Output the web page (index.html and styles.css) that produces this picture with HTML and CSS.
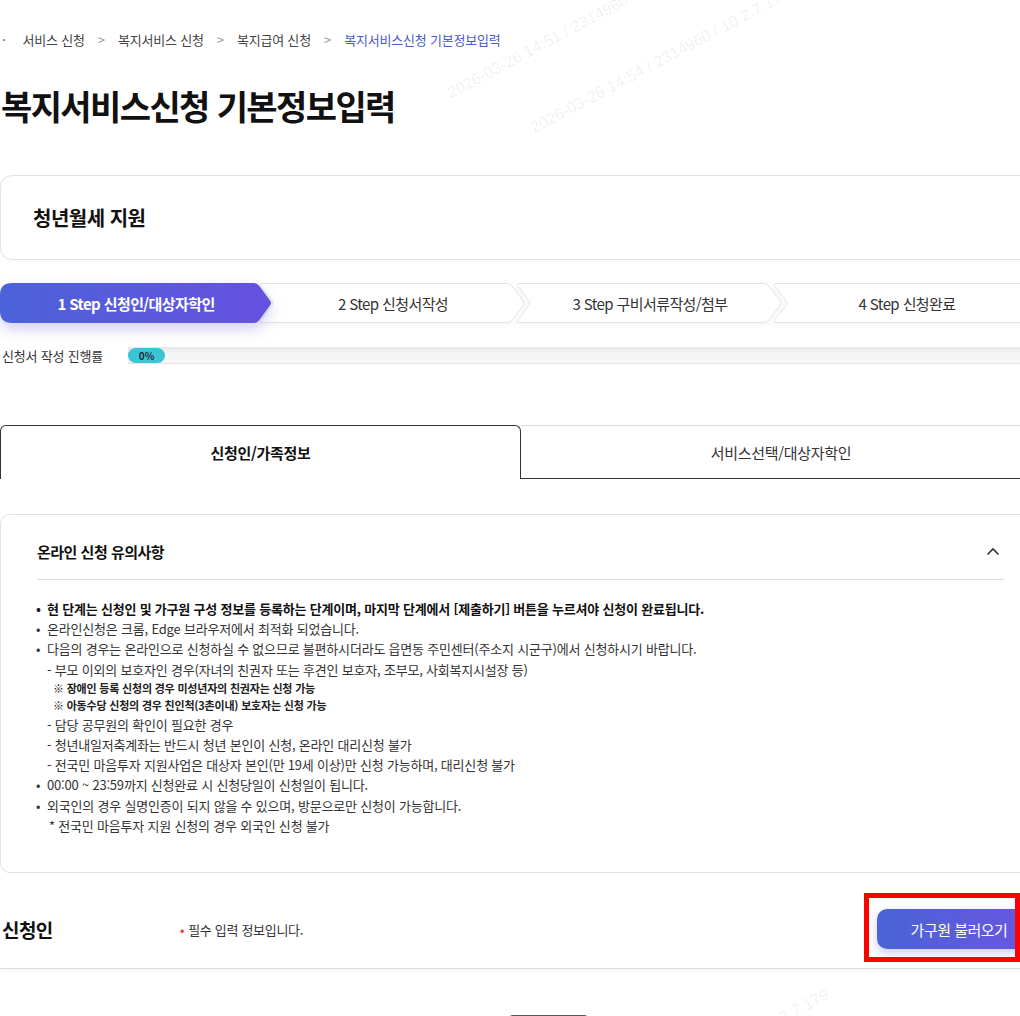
FILE: index.html
```html
<!DOCTYPE html>
<html lang="ko">
<head>
    <meta charset="UTF-8">
    <meta name="viewport" content="width=device-width, initial-scale=1.0">
    <title>복지서비스신청 기본정보입력</title>
    <link rel="stylesheet" href="styles.css">
</head>
<body>

<div class="page">
    <!-- 경로 -->
    <nav class="breadcrumb">
        <span class="crumb-home">·</span>
        <span>서비스 신청</span>
        <span class="sep">&gt;</span>
        <span>복지서비스 신청</span>
        <span class="sep">&gt;</span>
        <span>복지급여 신청</span>
        <span class="sep">&gt;</span>
        <span class="current">복지서비스신청 기본정보입력</span>
    </nav>

    <h1 class="page-title">복지서비스신청 기본정보입력</h1>

    <div class="service-card">청년월세 지원</div>

    <!-- 단계 -->
    <ol class="steps">
        <li class="step active">
            <svg width="272" height="40" viewBox="0 0 272 40">
                <defs>
                    <linearGradient id="stepGrad" x1="0" y1="0" x2="1" y2="0">
                        <stop offset="0" stop-color="#4c62d8"/>
                        <stop offset="1" stop-color="#6651df"/>
                    </linearGradient>
                </defs>
                <path d="M12 0 H254 Q257 0 259 2.5 L270 17.5 Q272 20 270 22.5 L259 37.5 Q257 40 254 40 H12 Q0 40 0 28 V12 Q0 0 12 0 Z" fill="url(#stepGrad)"/>
            </svg>
            <span>1 Step 신청인/대상자학인</span>
        </li>
        <li class="step">
            <svg width="272" height="40" viewBox="0 0 272 40">
                <path d="M5 0.5 H250 Q253 0.5 255 3 L266 17.5 Q268 20 266 22.5 L255 37 Q253 39.5 250 39.5 H5 Q2 39.5 3.5 37.5 L15 22.5 Q17 20 15 17.5 L3.5 2.5 Q2 0.5 5 0.5 Z" fill="#fff" stroke="#e4e4e4"/>
            </svg>
            <span>2 Step 신청서작성</span>
        </li>
        <li class="step">
            <svg width="272" height="40" viewBox="0 0 272 40">
                <path d="M5 0.5 H250 Q253 0.5 255 3 L266 17.5 Q268 20 266 22.5 L255 37 Q253 39.5 250 39.5 H5 Q2 39.5 3.5 37.5 L15 22.5 Q17 20 15 17.5 L3.5 2.5 Q2 0.5 5 0.5 Z" fill="#fff" stroke="#e4e4e4"/>
            </svg>
            <span>3 Step 구비서류작성/첨부</span>
        </li>
        <li class="step">
            <svg width="272" height="40" viewBox="0 0 272 40">
                <path d="M5 0.5 H260 Q271.5 0.5 271.5 12 V28 Q271.5 39.5 260 39.5 H5 Q2 39.5 3.5 37.5 L15 22.5 Q17 20 15 17.5 L3.5 2.5 Q2 0.5 5 0.5 Z" fill="#fff" stroke="#e4e4e4"/>
            </svg>
            <span>4 Step 신청완료</span>
        </li>
    </ol>

    <div class="progress-row">
        <span class="progress-label">신청서 작성 진행률</span>
        <div class="progress-track">
            <div class="progress-fill">0%</div>
        </div>
    </div>

    <!-- 탭 -->
    <div class="tabs">
        <div class="tab active">신청인/가족정보</div>
        <div class="tab">서비스선택/대상자학인</div>
    </div>

    <!-- 유의사항 -->
    <section class="notice">
        <div class="notice-head">
            <h3>온라인 신청 유의사항</h3>
            <svg class="chevron" width="14" height="9" viewBox="0 0 14 9">
                <polyline points="1.5,7.5 7,2 12.5,7.5" fill="none" stroke="#333" stroke-width="1.6"/>
            </svg>
        </div>
        <ul class="notice-list">
            <li class="strong">현 단계는 신청인 및 가구원 구성 정보를 등록하는 단계이며, 마지막 단계에서 [제출하기] 버튼을 누르셔야 신청이 완료됩니다.</li>
            <li>온라인신청은 크롬, Edge 브라우저에서 최적화 되었습니다.</li>
            <li>다음의 경우는 온라인으로 신청하실 수 없으므로 불편하시더라도 읍면동 주민센터(주소지 시군구)에서 신청하시기 바랍니다.
                <p class="sub">- 부모 이외의 보호자인 경우(자녀의 친권자 또는 후견인 보호자, 조부모, 사회복지시설장 등)</p>
                <p class="mark">※ 장애인 등록 신청의 경우 미성년자의 친권자는 신청 가능</p>
                <p class="mark">※ 아동수당 신청의 경우 친인척(3촌이내) 보호자는 신청 가능</p>
                <p class="sub">- 담당 공무원의 확인이 필요한 경우</p>
                <p class="sub">- 청년내일저축계좌는 반드시 청년 본인이 신청, 온라인 대리신청 불가</p>
                <p class="sub">- 전국민 마음투자 지원사업은 대상자 본인(만 19세 이상)만 신청 가능하며, 대리신청 불가</p>
            </li>
            <li>00:00 ~ 23:59까지 신청완료 시 신청당일이 신청일이 됩니다.</li>
            <li>외국인의 경우 실명인증이 되지 않을 수 있으며, 방문으로만 신청이 가능합니다.
                <p class="star">* 전국민 마음투자 지원 신청의 경우 외국인 신청 불가</p>
            </li>
        </ul>
    </section>

    <!-- 신청인 -->
    <div class="applicant-head">
        <h2 class="applicant-title">신청인</h2>
        <p class="required-note">필수 입력 정보입니다.</p>
        <button class="btn-family">가구원 불러오기</button>
    </div>

    <div class="bottom-btn"></div>

    <div class="highlight-box"></div>

    <span class="watermark wm-1">2026-03-26 14:51 / 2314960 / 10.2.7.179</span>
    <span class="watermark wm-2">2026-03-26 14:54 / 2314960 / 10.2.7.179</span>
    <span class="watermark wm-3">2026-03-26 14:54 / 2314960 / 10.2.7.179</span>
</div>

</body>
</html>
```

FILE: styles.css
```css
* {
    box-sizing: border-box;
}

html, body {
    margin: 0;
    overflow: hidden;
}

body {
    font-family: "Noto Sans CJK KR", "Noto Sans", sans-serif;
    color: #222;
    background-color: #fff;
}

.page {
    position: relative;
    width: 1041px;
    height: 1016px;
}

/* 경로 */
.breadcrumb {
    display: flex;
    align-items: center;
    gap: 13px;
    height: 50px;
    padding: 30px 0 0 2px;
    font-size: 13px;
    line-height: 20px;
    letter-spacing: -0.2px;
    color: #444;
}

.breadcrumb .crumb-home {
    margin-right: 4px;
}

.breadcrumb .sep {
    color: #999;
    letter-spacing: 0;
}

.breadcrumb .current {
    color: #4a5ad2;
}

.page-title {
    margin: 35px 0 0;
    padding-left: 1px;
    font-size: 34px;
    line-height: 42px;
    font-weight: 700;
    letter-spacing: -1.6px;
    color: #111;
}

.service-card {
    display: flex;
    align-items: center;
    height: 85px;
    margin-top: 48px;
    padding-left: 32px;
    border: 1px solid #e2e2e2;
    border-radius: 12px;
    box-shadow: 0 1px 3px rgba(0, 0, 0, 0.04);
    font-size: 20px;
    font-weight: 700;
    letter-spacing: -0.5px;
    color: #111;
}

/* 단계 */
.steps {
    display: flex;
    height: 40px;
    margin: 23px 0 0;
    padding: 0;
    list-style: none;
}

.step {
    position: relative;
    flex: 0 0 272px;
    display: flex;
    align-items: center;
    justify-content: center;
    height: 40px;
    font-size: 15px;
    letter-spacing: -0.6px;
    color: #333;
}

.step + .step {
    margin-left: -15px;
}

.step svg {
    position: absolute;
    left: 0;
    top: 0;
    filter: drop-shadow(0 2px 3px rgba(0, 0, 0, 0.04));
}

.step span {
    position: relative;
}

.step.active {
    z-index: 2;
    color: #fff;
    font-weight: 700;
}

.step.active svg {
    filter: drop-shadow(0 6px 7px rgba(90, 82, 220, 0.28));
}

.progress-row {
    display: flex;
    align-items: center;
    height: 17px;
    margin-top: 24px;
}

.progress-label {
    width: 128px;
    padding-left: 2px;
    font-size: 13px;
    letter-spacing: -0.2px;
    color: #333;
}

.progress-track {
    flex: 1;
    display: flex;
    align-items: center;
    height: 17px;
    background-color: #f6f6f6;
    border-bottom: 1px solid #e6e6e6;
    box-shadow: inset 0 3px 4px rgba(0, 0, 0, 0.07);
}

.progress-fill {
    display: flex;
    align-items: center;
    justify-content: center;
    width: 37px;
    height: 15px;
    border-radius: 8px;
    background-color: #3bc4d4;
    font-size: 10px;
    font-weight: 700;
    color: #1d2a3a;
}

/* 탭 */
.tabs {
    display: flex;
    height: 54px;
    margin-top: 61px;
}

.tab {
    display: flex;
    align-items: center;
    justify-content: center;
    flex: 1;
    font-size: 15px;
    letter-spacing: -0.3px;
    color: #333;
    border-top: 1px solid #d8d8d8;
    border-bottom: 1px solid #333;
}

.tab.active {
    flex: 0 0 521px;
    border: 1px solid #333;
    border-bottom: none;
    border-radius: 6px 6px 0 0;
    font-weight: 700;
    color: #111;
}

/* 유의사항 */
.notice {
    margin-top: 35px;
    padding: 24px 36px 36px;
    border: 1px solid #e2e2e2;
    border-radius: 10px;
}

.notice-head {
    display: flex;
    align-items: center;
    justify-content: space-between;
    height: 41px;
    padding: 0 4px 15px 0;
    border-bottom: 1px solid #ddd;
}

.notice-head h3 {
    margin: 0;
    font-size: 15px;
    font-weight: 700;
    letter-spacing: -0.5px;
    color: #111;
}

.notice-list {
    margin: 19px 0 0;
    padding: 0;
    list-style: none;
    font-size: 13px;
    line-height: 20.2px;
    letter-spacing: -0.2px;
    color: #333;
}

.notice-list li {
    position: relative;
    padding-left: 10px;
}

.notice-list li::before {
    content: "•";
    position: absolute;
    left: -1px;
    top: 0;
}

.notice-list li.strong {
    font-weight: 700;
    color: #111;
}

.notice-list p {
    margin: 0;
}

.notice-list .mark {
    margin-left: 6px;
    font-size: 11px;
    line-height: 17.5px;
    font-weight: 700;
    color: #222;
}

.notice-list .star {
    margin-left: 2px;
}

/* 신청인 */
.applicant-head {
    display: flex;
    align-items: center;
    padding: 36px 0 19px;
    border-bottom: 1px solid #ddd;
    box-shadow: 0 2px 3px rgba(0, 0, 0, 0.04);
}

.applicant-title {
    width: 180px;
    margin: 0;
    padding-left: 2px;
    font-size: 19px;
    font-weight: 700;
    letter-spacing: -0.6px;
    color: #111;
}

.required-note {
    flex: 1;
    margin: 0;
    font-size: 13px;
    letter-spacing: -0.3px;
    color: #333;
}

.required-note::before {
    content: "•";
    margin-right: 4px;
    color: #e23c3c;
}

.btn-family {
    width: 164px;
    height: 40px;
    border: none;
    border-radius: 10px;
    background: linear-gradient(90deg, #4b64d6, #6a55e0);
    box-shadow: 0 4px 10px rgba(80, 90, 220, 0.3);
    font-family: inherit;
    font-size: 15px;
    letter-spacing: -0.5px;
    color: #fff;
}

.bottom-btn {
    width: 79px;
    height: 30px;
    margin: 46px 0 0 509px;
    border-radius: 4px;
    background-color: #555;
}

.highlight-box {
    position: absolute;
    left: 864px;
    top: 893px;
    width: 156px;
    height: 69px;
    border: 5px solid #ff0000;
}

.watermark {
    position: absolute;
    font-family: "Liberation Sans", sans-serif;
    font-size: 16px;
    white-space: nowrap;
    color: rgba(0, 0, 0, 0.07);
    transform: rotate(-28deg);
    transform-origin: left bottom;
    pointer-events: none;
}

.wm-1 {
    left: 453px;
    top: 84px;
}

.wm-2 {
    left: 536px;
    top: 119px;
}

.wm-3 {
    left: 575px;
    top: 1120px;
}
```
